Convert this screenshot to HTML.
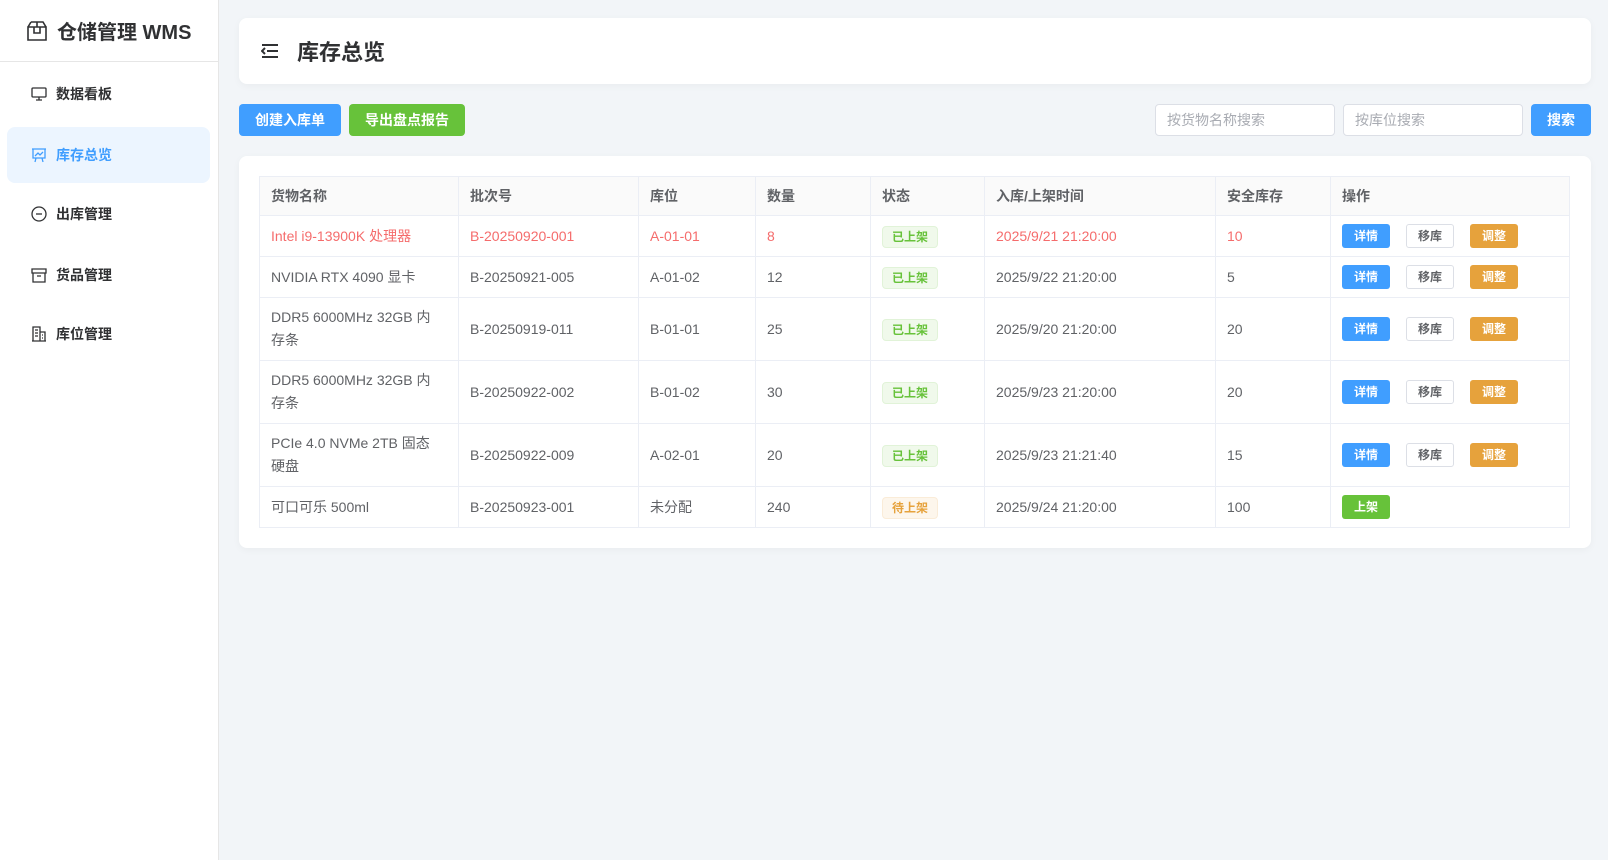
<!DOCTYPE html>
<html><head><meta charset="utf-8"><style>
*{box-sizing:border-box;margin:0;padding:0}
body{width:1608px;height:860px;background:#f2f5f8;font-family:"Liberation Sans","Noto Sans CJK SC",sans-serif;color:#303133;position:relative;overflow:hidden}
.side{position:absolute;left:0;top:0;width:219px;height:860px;background:#fff;border-right:1px solid #e6e6e6}
.logo{height:62px;border-bottom:1px solid #e6e6e6;display:flex;align-items:center;padding-left:26px;font-size:20px;font-weight:bold;color:#303133}
.logo svg{margin-right:9px}
.item{position:absolute;left:7px;width:203px;height:56px;display:flex;align-items:center;padding-left:24px;font-size:14px;font-weight:bold;color:#303133;border-radius:8px}
.item svg{margin-right:9px}
.item.act{background:#ecf5ff;color:#409eff}
.hdr{position:absolute;left:239px;top:18px;width:1352px;height:66px;background:#fff;border-radius:8px;box-shadow:0 2px 8px rgba(0,0,0,.04);display:flex;align-items:center;padding-left:22px;font-size:22px;font-weight:bold}
.hdr svg{margin-right:18px}
.btn{position:absolute;top:104px;height:32px;border-radius:4px;color:#fff;font-size:14px;font-weight:bold;display:flex;align-items:center;justify-content:center}
.inp{position:absolute;top:104px;height:32px;border:1px solid #dcdfe6;border-radius:4px;background:#fff;font-size:14px;color:#a8abb2;padding-left:11px;display:flex;align-items:center}
.card{position:absolute;left:239px;top:156px;width:1352px;height:392px;background:#fff;border-radius:8px;box-shadow:0 2px 8px rgba(0,0,0,.04)}
table{position:absolute;left:20px;top:20px;width:1311px;border-collapse:collapse;font-size:14px;color:#606266}
td,th{border:1px solid #ebeef5;padding:0 11px;text-align:left;line-height:23px;white-space:nowrap}
th{background:#fafafa;color:#606266;font-weight:bold;height:39px}
tr.r td{color:#f56c6c}
.tag{display:inline-block;height:22px;line-height:20px;padding:0 9px;font-size:12px;border:1px solid #e1f3d8;background:#f0f9eb;color:#67c23a!important;border-radius:4px;font-weight:bold}
.tag.o{border-color:#faecd8;background:#fdf6ec;color:#e6a23c!important}
.ab{display:inline-block;width:48px;height:24px;line-height:22px;text-align:center;font-size:12px;font-weight:bold;border-radius:3px;margin-right:16px;border:1px solid transparent;color:#fff}
.b{background:#409eff}.w{background:#fff;border-color:#dcdfe6;color:#606266}.y{background:#e6a23c}.g{background:#67c23a}
</style></head><body>
<div class="side">
<div class="logo"><svg width="22" height="22" viewBox="0 0 22 22" fill="none" stroke="#303133" stroke-width="1.6"><path d="M2 7h18v13H2zM5 2h12l3 5M5 2 2 7M8 7v6h6V7M11 2v5"/></svg>仓储管理 WMS</div>
<div class="item" style="top:66px"><svg width="16" height="16" viewBox="0 0 16 16" fill="none" stroke="#303133" stroke-width="1.3"><rect x="1" y="2" width="14" height="9" rx="1"/><path d="M8 11v3M5 14h6"/></svg>数据看板</div>
<div class="item act" style="top:127px"><svg width="16" height="16" viewBox="0 0 16 16" fill="none" stroke="#409eff" stroke-width="1.3"><path d="M1 2h14M2 2v9h12V2M5 11l-1 4M11 11l1 4M4 9l3-3 2 2 3-3"/></svg>库存总览</div>
<div class="item" style="top:186px"><svg width="16" height="16" viewBox="0 0 16 16" fill="none" stroke="#303133" stroke-width="1.3"><circle cx="8" cy="8" r="7"/><path d="M5 8h6"/></svg>出库管理</div>
<div class="item" style="top:247px"><svg width="16" height="16" viewBox="0 0 16 16" fill="none" stroke="#303133" stroke-width="1.3"><path d="M1 2h14v4H1zM2 6v9h12V6M6 9h4"/></svg>货品管理</div>
<div class="item" style="top:306px"><svg width="16" height="16" viewBox="0 0 16 16" fill="none" stroke="#303133" stroke-width="1.3"><path d="M2 15V1h7v14M9 6h5v9M1 15h14M4 4h3M4 7h3M4 10h3M11 9h1M11 12h1"/></svg>库位管理</div>
</div>
<div class="hdr"><svg width="18" height="16" viewBox="0 0 18 16" fill="none" stroke="#303133" stroke-width="2"><path d="M1 2h16M6 8h11M1 14h16M4 5 1 8l3 3"/></svg>库存总览</div>
<div class="btn" style="left:239px;width:102px;background:#409eff">创建入库单</div>
<div class="btn" style="left:349px;width:116px;background:#67c23a">导出盘点报告</div>
<div class="inp" style="left:1155px;width:180px">按货物名称搜索</div>
<div class="inp" style="left:1343px;width:180px">按库位搜索</div>
<div class="btn" style="left:1531px;width:60px;background:#409eff">搜索</div>
<div class="card">
<table>
<colgroup><col style="width:199px"><col style="width:180px"><col style="width:117px"><col style="width:115px"><col style="width:114px"><col style="width:231px"><col style="width:115px"><col></colgroup>
<tr><th>货物名称</th><th>批次号</th><th>库位</th><th>数量</th><th>状态</th><th>入库/上架时间</th><th>安全库存</th><th>操作</th></tr>
<tr class="r" style="height:41px"><td>Intel i9-13900K 处理器</td><td>B-20250920-001</td><td>A-01-01</td><td>8</td><td><span class="tag">已上架</span></td><td>2025/9/21 21:20:00</td><td>10</td><td><span class="ab b">详情</span><span class="ab w">移库</span><span class="ab y">调整</span></td></tr>
<tr style="height:41px"><td>NVIDIA RTX 4090 显卡</td><td>B-20250921-005</td><td>A-01-02</td><td>12</td><td><span class="tag">已上架</span></td><td>2025/9/22 21:20:00</td><td>5</td><td><span class="ab b">详情</span><span class="ab w">移库</span><span class="ab y">调整</span></td></tr>
<tr style="height:63px"><td>DDR5 6000MHz 32GB 内<br>存条</td><td>B-20250919-011</td><td>B-01-01</td><td>25</td><td><span class="tag">已上架</span></td><td>2025/9/20 21:20:00</td><td>20</td><td><span class="ab b">详情</span><span class="ab w">移库</span><span class="ab y">调整</span></td></tr>
<tr style="height:63px"><td>DDR5 6000MHz 32GB 内<br>存条</td><td>B-20250922-002</td><td>B-01-02</td><td>30</td><td><span class="tag">已上架</span></td><td>2025/9/23 21:20:00</td><td>20</td><td><span class="ab b">详情</span><span class="ab w">移库</span><span class="ab y">调整</span></td></tr>
<tr style="height:63px"><td>PCIe 4.0 NVMe 2TB 固态<br>硬盘</td><td>B-20250922-009</td><td>A-02-01</td><td>20</td><td><span class="tag">已上架</span></td><td>2025/9/23 21:21:40</td><td>15</td><td><span class="ab b">详情</span><span class="ab w">移库</span><span class="ab y">调整</span></td></tr>
<tr style="height:41px"><td>可口可乐 500ml</td><td>B-20250923-001</td><td>未分配</td><td>240</td><td><span class="tag o">待上架</span></td><td>2025/9/24 21:20:00</td><td>100</td><td><span class="ab g">上架</span></td></tr>
</table>
</div>
</body></html>
